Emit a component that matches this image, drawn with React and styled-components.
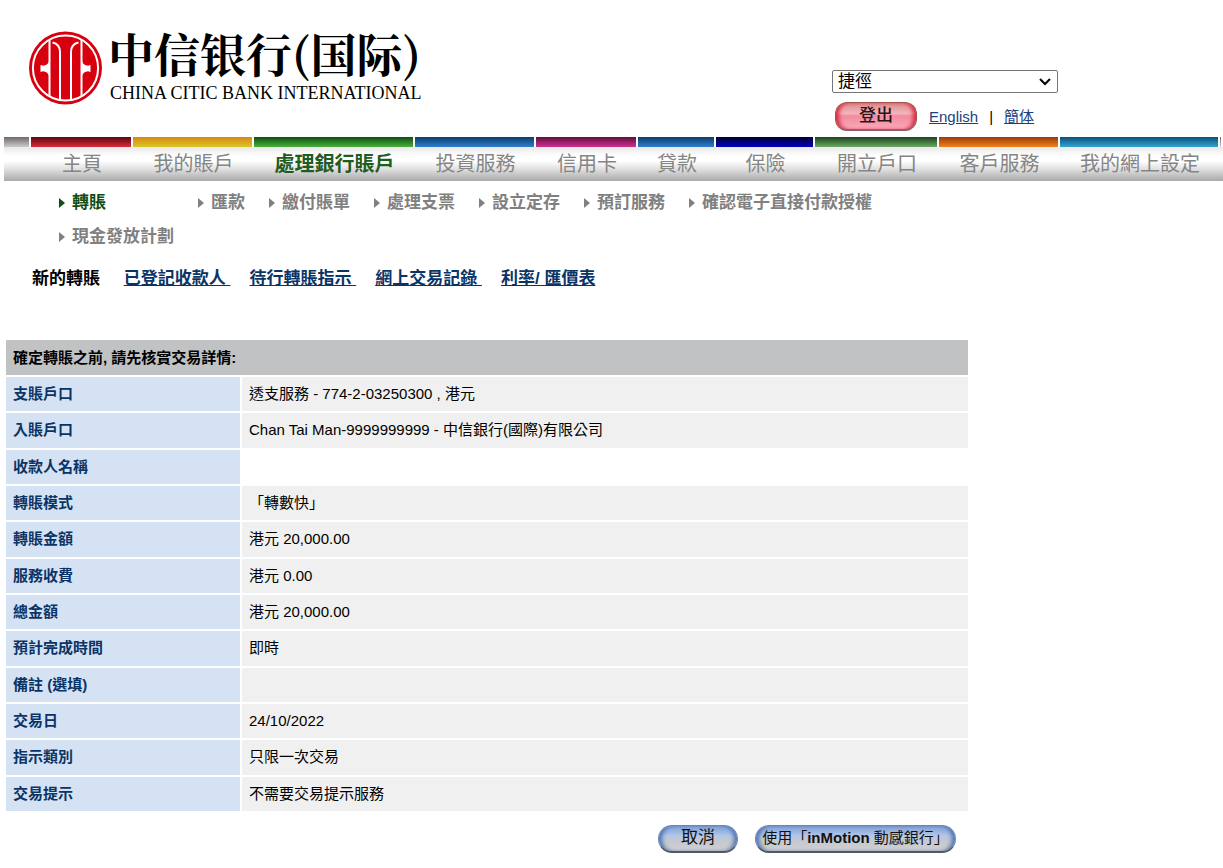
import React from 'react';
import styled, { createGlobalStyle, css } from 'styled-components';

const Global = createGlobalStyle`
  * { box-sizing: border-box; }
  body {
    margin: 0;
    background: #fff;
    color: #000;
    font: 15px/20px "Liberation Sans", "Noto Sans CJK TC", sans-serif;
  }
`;

const Page = styled.div`
  padding-left: 4px;
  overflow-x: hidden;
`;

const Header = styled.header`
  display: flex;
  height: 137px;
`;

const Brand = styled.div`
  flex: 0 1 828px;
  display: flex;
  align-items: flex-start;
  gap: 6px;
  padding: 31px 0 0 24px;
`;

const Emblem = styled.svg`
  flex: none;
  width: 74px;
  height: 74px;
`;

const BrandText = styled.div`
  color: #000;
  white-space: nowrap;
`;

const BrandName = styled.div`
  font: 700 46px/42px "Noto Serif CJK SC", "Noto Sans CJK SC", serif;
`;

const BrandLatin = styled.div`
  margin-top: 10px;
  font: 18px/20px "Liberation Serif", serif;
  padding-left: 2px;
`;

const Tools = styled.div`
  padding-top: 70px;
`;

const Shortcut = styled.select`
  display: block;
  width: 226px;
  height: 23px;
  padding: 0 30px 0 5px;
  border: 1px solid #767676;
  border-radius: 2px;
  appearance: none;
  background: #fff;
  color: #000;
  font: 17px/20px "Liberation Sans", "Noto Sans CJK TC", sans-serif;
`;

const ShortcutBox = styled.div`
  position: relative;
  width: 226px;

  svg {
    position: absolute;
    top: 8px;
    right: 7px;
    width: 12px;
    height: 8px;
    fill: none;
    stroke: #000;
    stroke-width: 2;
    pointer-events: none;
  }
`;

const ToolRow = styled.div`
  display: flex;
  align-items: center;
  gap: 11px;
  margin-top: 9px;
  padding-left: 3px;
`;

const ToolLink = styled.a`
  color: #1c3f7f;
`;

const Logout = styled.button`
  width: 82px;
  height: 29px;
  margin-right: 1px;
  padding: 0 0 1px;
  border: 1px solid #a8524c;
  border-bottom: 2px solid #9b5a65;
  border-radius: 12px;
  background: linear-gradient(#d98a86, #f5b5be 40%, #f28c9e 50%, #fba9bc);
  box-shadow: inset 5px 0 4px -2px #d8283f, inset -5px 0 4px -2px #d8283f;
  color: #2b1418;
  font: 500 17px/20px "Liberation Sans", "Noto Sans CJK TC", sans-serif;
`;

const Tabs = styled.nav`
  display: flex;
  height: 44px;
  background: linear-gradient(#fff 0 10px, #e9e9e9 10px, #fff 19px, #fff 24px, #dcdcdc 33px, #a9a9a9 44px);
`;

const Tab = styled.a`
  flex: ${(p) => p.$w} 1 0;
  text-align: center;
  text-decoration: none;
  white-space: nowrap;
  color: ${(p) => (p.$active ? '#1f5c1f' : '#858585')};
  font: ${(p) => (p.$active ? 700 : 400)} 20px/32px "Noto Sans CJK TC", sans-serif;

  &::before {
    content: "";
    display: block;
    height: 10px;
    margin-right: 2px;
    background: linear-gradient(${(p) => p.$from}, ${(p) => p.$to});
  }
`;

const SubNav = styled.nav`
  display: flex;
  flex-wrap: wrap;
  column-gap: 23px;
  row-gap: 14px;
  max-width: 874px;
  padding: 12px 0 0 54px;
`;

const SubLink = styled.a`
  display: flex;
  align-items: center;
  gap: 7px;
  min-width: ${(p) => (p.$active ? '116px' : '0')};
  color: ${(p) => (p.$active ? '#0f4f14' : '#808080')};
  font-size: 17px;
  font-weight: 700;
  text-decoration: none;

  svg { flex: none; width: 7px; height: 10px; fill: currentColor; }
`;

const PageNav = styled.nav`
  display: flex;
  gap: 19px;
  padding: 22px 0 0 28px;
  font-size: 17px;
  font-weight: 700;
  white-space: pre;
`;

const PageLink = styled.a`
  color: #0b3466;
`;

const Details = styled.table`
  width: 100%;
  max-width: 966px;
  height: 475px;
  margin-top: 49px;
  border-spacing: 2px;
  table-layout: fixed;
`;

const LabelColumn = styled.col`
  width: 234px;
`;

const cell = css`
  padding: 0 7px;
  text-align: left;
  vertical-align: middle;
`;

const Heading = styled.th`
  ${cell}
  height: 35px;
  background: #c0c2c3;
`;

const Label = styled.th`
  ${cell}
  background: #d5e2f4;
  color: #0b3466;
`;

const Value = styled.td`
  ${cell}
  background: ${(p) => (p.$blank ? '#fff' : '#f0f0f0')};
`;

const Actions = styled.div`
  display: flex;
  justify-content: flex-end;
  gap: 17px;
  max-width: 966px;
  padding: 12px 14px 15px 0;
`;

const Action = styled.button`
  width: ${(p) => (p.$wide ? '201px' : '80px')};
  height: 28px;
  padding: 0 0 2px;
  border: 1px solid #6d87b4;
  border-bottom: 2px solid #55585f;
  border-radius: 14px;
  background: linear-gradient(#7f9fd4, #b3c7ea 40%, #c4c8d0 55%, #cfcfcf);
  box-shadow: inset 5px 0 4px -2px #4f74b5, inset -5px 0 4px -2px #4f74b5;
  color: #111;
  font: ${(p) => (p.$wide ? '15px' : '17px')}/20px "Liberation Sans", "Noto Sans CJK TC", sans-serif;
  white-space: nowrap;
`;

const tabs = [
  ['', 27, '#6f6a6a', '#cfcaca'],
  ['主頁', 102, '#5c0812', '#d92c3a'],
  ['我的賬戶', 121, '#d9870f', '#d8c52a'],
  ['處理銀行賬戶', 161, '#0f4f10', '#49b03c'],
  ['投資服務', 121, '#0b3d6e', '#2f7fca'],
  ['信用卡', 102, '#5f0f42', '#d0308c'],
  ['貸款', 78, '#0b3d6e', '#2f7fca'],
  ['保險', 99, '#000030', '#0000c0'],
  ['開立戶口', 124, '#1c431c', '#69a862'],
  ['客戶服務', 121, '#9a3a08', '#ee8418'],
  ['我的網上設定', 160, '#08517a', '#35a3d0'],
  ['', 3, '#6f6a6a', '#cfcaca'],
];

const subLinks = ['轉賬', '匯款', '繳付賬單', '處理支票', '設立定存', '預訂服務', '確認電子直接付款授權', '現金發放計劃'];
const pageLinks = ['已登記收款人 ', '待行轉賬指示 ', '網上交易記錄 ', '利率/ 匯價表'];

const rows = [
  ['支賬戶口', '透支服務 - 774-2-03250300 , 港元'],
  ['入賬戶口', 'Chan Tai Man-9999999999 - 中信銀行(國際)有限公司'],
  ['收款人名稱', null],
  ['轉賬模式', '「轉數快」'],
  ['轉賬金額', '港元 20,000.00'],
  ['服務收費', '港元 0.00'],
  ['總金額', '港元 20,000.00'],
  ['預計完成時間', '即時'],
  ['備註 (選填)', ''],
  ['交易日', '24/10/2022'],
  ['指示類別', '只限一次交易'],
  ['交易提示', '不需要交易提示服務'],
];

function Logo() {
  return (
    <Emblem viewBox="0 0 74 74" aria-hidden="true">
      <circle cx="37.5" cy="37" r="36.5" fill="#d7000f" />
      <circle cx="37.5" cy="37" r="32.6" fill="none" stroke="#fff" strokeWidth="2" />
      <g fill="none" stroke="#fff" strokeWidth="2">
        <path d="M21.5 9V65M53.5 9V65" />
        <path d="M24.5 11.5C29 12.5 32 16 32 21V69M50.5 11.5C46 12.5 43 16 43 21V69" />
      </g>
      <path
        d="M21 30.5V44.5C20 42 18 40.6 15 40.2L12.5 41V34L15 34.8C18 34.4 20 33 21 30.5Z
           M54 30.5V44.5C55 42 57 40.6 60 40.2L62.5 41V34L60 34.8C57 34.4 55 33 54 30.5Z"
        fill="#fff"
      />
    </Emblem>
  );
}

export default function App() {
  return (
    <>
      <Global />
      <Page>
        <Header>
          <Brand>
            <Logo />
            <BrandText>
              <BrandName lang="zh-CN">中信银行(国际)</BrandName>
              <BrandLatin>CHINA CITIC BANK INTERNATIONAL</BrandLatin>
            </BrandText>
          </Brand>
          <Tools>
            <ShortcutBox>
              <Shortcut aria-label="捷徑">
                <option>捷徑</option>
              </Shortcut>
              <svg viewBox="0 0 12 8"><path d="M1 1L6 6L11 1" /></svg>
            </ShortcutBox>
            <ToolRow>
              <Logout type="button">登出</Logout>
              <ToolLink href="#en">English</ToolLink>
              <span>|</span>
              <ToolLink href="#sc">簡体</ToolLink>
            </ToolRow>
          </Tools>
        </Header>
        <Tabs>
          {tabs.map(([name, w, from, to], i) => (
            <Tab
              key={i}
              as={name ? 'a' : 'span'}
              href={name ? '#' + name : undefined}
              $w={w}
              $from={from}
              $to={to}
              $active={i === 3}
            >
              {name}
            </Tab>
          ))}
        </Tabs>
        <SubNav>
          {subLinks.map((name, i) => (
            <SubLink key={name} href={'#' + name} $active={i === 0}>
              <svg viewBox="0 0 7 10"><path d="M1 0L7 5L1 10Z" /></svg>
              {name}
            </SubLink>
          ))}
        </SubNav>
        <PageNav>
          <span>{'新的轉賬 '}</span>
          {pageLinks.map((name) => (
            <PageLink key={name} href={'#' + name.trim()}>{name}</PageLink>
          ))}
        </PageNav>
        <Details>
          <colgroup>
            <LabelColumn />
            <col />
          </colgroup>
          <thead>
            <tr>
              <Heading colSpan={2}>確定轉賬之前, 請先核實交易詳情:</Heading>
            </tr>
          </thead>
          <tbody>
            {rows.map(([label, value]) => (
              <tr key={label}>
                <Label scope="row">{label}</Label>
                <Value $blank={value === null}>{value}</Value>
              </tr>
            ))}
          </tbody>
        </Details>
        <Actions>
          <Action type="button">取消</Action>
          <Action type="button" $wide>使用「<b>inMotion</b> 動感銀行」</Action>
        </Actions>
      </Page>
    </>
  );
}
